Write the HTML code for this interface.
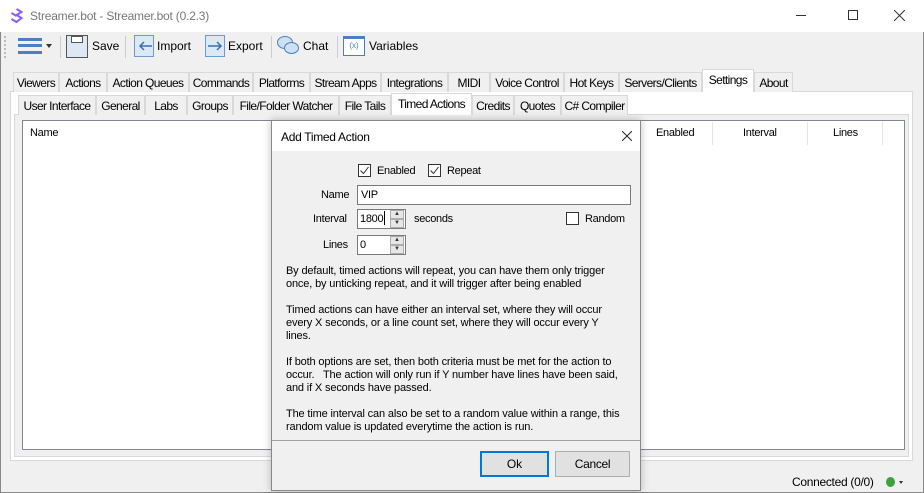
<!DOCTYPE html>
<html><head><meta charset="utf-8"><style>
*{box-sizing:border-box;margin:0;padding:0}
body{width:924px;height:493px;overflow:hidden;background:#f0f0f0;font-family:"Liberation Sans",sans-serif;font-size:12px;color:#000;position:relative}
.a{position:absolute;white-space:nowrap}
.tab{position:absolute;height:20px;border:1px solid #d9d9d9;border-bottom:none;background:#f0f0f0;font-size:12px;line-height:20px;text-align:center;letter-spacing:-0.6px}
.sel{background:#fff;border-color:#d9d9d9}
.s{font-size:11px;letter-spacing:-0.3px}
.p{font-size:11px;line-height:13px;white-space:pre;letter-spacing:-0.15px}
.cb{position:absolute;width:13px;height:13px;border:1px solid #333;background:#fff}
.spin{position:absolute;width:14px;border:1px solid #adadad;background:#e6e6e6;font-size:6px;line-height:7px;text-align:center;color:#333}
</style></head><body>
<div class="a" style="left:0;top:0;width:924px;height:493px;border:1px solid #888;border-top:none"></div>
<div class="a" style="left:0;top:0;width:924px;height:32px;background:#fff"></div>
<svg class="a" style="left:10px;top:8px" width="13" height="16" viewBox="0 0 13 16"><path d="M6.5 1 L11.5 4 L6.5 7 L11.5 10 L6.5 14 L1.5 11 M1.5 5 L6.5 8" fill="none" stroke="#8a5cf6" stroke-width="2"/></svg>
<div class="a" style="left:30px;top:9px;font-size:12px;color:#777;letter-spacing:-0.2px">Streamer.bot - Streamer.bot (0.2.3)</div>
<div class="a" style="left:796px;top:15px;width:10px;height:1px;background:#333"></div>
<div class="a" style="left:848px;top:10px;width:10px;height:10px;border:1px solid #333"></div>
<svg class="a" style="left:894px;top:10px" width="11" height="11"><path d="M0 0L11 11M11 0L0 11" stroke="#333" stroke-width="1"/></svg>
<div class="a" style="left:4px;top:36px;width:1px;height:22px;border-left:2px dotted #bbb"></div>
<div class="a" style="left:18px;top:38px;width:24px;height:16px;border-top:3px solid #4a7fc1;border-bottom:3px solid #4a7fc1"></div>
<div class="a" style="left:18px;top:44px;width:24px;height:3px;background:#4a7fc1"></div>
<div class="a" style="left:46px;top:44px;border:3px solid transparent;border-top:4px solid #333"></div>
<div class="a" style="left:60px;top:36px;width:1px;height:22px;background:#ccc"></div>
<div class="a" style="left:66px;top:35px;width:22px;height:23px;border:1px solid #555;background:#dce8f5"></div>
<div class="a" style="left:71px;top:36px;width:12px;height:7px;border:1px solid #555;background:#fff"></div>
<div class="a" style="left:92px;top:39px">Save</div>
<div class="a" style="left:125px;top:36px;width:1px;height:22px;background:#ccc"></div>
<div class="a" style="left:134px;top:35px;width:20px;height:22px;border:1px solid #6a9ad0;background:#dce8f5"></div>
<svg class="a" style="left:137px;top:40px" width="16" height="12"><path d="M15 6H3M7 2L3 6L7 10" fill="none" stroke="#3a6fb0" stroke-width="1.5"/></svg>
<div class="a" style="left:157px;top:39px">Import</div>
<div class="a" style="left:205px;top:35px;width:20px;height:22px;border:1px solid #6a9ad0;background:#dce8f5"></div>
<svg class="a" style="left:207px;top:40px" width="18" height="12"><path d="M1 6H14M10 2L14 6L10 10" fill="none" stroke="#3a6fb0" stroke-width="1.5"/></svg>
<div class="a" style="left:228px;top:39px">Export</div>
<div class="a" style="left:271px;top:36px;width:1px;height:22px;background:#ccc"></div>
<div class="a" style="left:277px;top:36px;width:16px;height:13px;border-radius:50%;border:1px solid #4a7fc1;background:#cfe0f3"></div>
<div class="a" style="left:284px;top:42px;width:15px;height:12px;border-radius:50%;border:1px solid #4a7fc1;background:#cfe0f3"></div>
<div class="a" style="left:303px;top:39px">Chat</div>
<div class="a" style="left:337px;top:36px;width:1px;height:22px;background:#ccc"></div>
<div class="a" style="left:343px;top:36px;width:22px;height:20px;border:1px solid #4a7fc1;border-top:3px solid #4a7fc1;background:#fff;font-size:8px;line-height:14px;text-align:center;color:#4a7fc1">(x)</div>
<div class="a" style="left:369px;top:39px">Variables</div>
<div class="a" style="left:10px;top:91px;width:903px;height:370px;border:1px solid #d9d9d9;background:#fff"></div>
<div class="tab" style="left:13px;top:72px;width:46px">Viewers</div>
<div class="tab" style="left:59px;top:72px;width:48px">Actions</div>
<div class="tab" style="left:107px;top:72px;width:82px">Action Queues</div>
<div class="tab" style="left:189px;top:72px;width:64px">Commands</div>
<div class="tab" style="left:253px;top:72px;width:57px">Platforms</div>
<div class="tab" style="left:310px;top:72px;width:71px">Stream Apps</div>
<div class="tab" style="left:381px;top:72px;width:67px">Integrations</div>
<div class="tab" style="left:448px;top:72px;width:42px">MIDI</div>
<div class="tab" style="left:490px;top:72px;width:74px">Voice Control</div>
<div class="tab" style="left:564px;top:72px;width:55px">Hot Keys</div>
<div class="tab" style="left:619px;top:72px;width:83px">Servers/Clients</div>
<div class="tab sel" style="left:702px;top:69px;width:52px;height:23px;line-height:20px">Settings</div>
<div class="tab" style="left:754px;top:72px;width:39px">About</div>
<div class="a" style="left:14px;top:114px;width:895px;height:343px;border:1px solid #d9d9d9;background:#f0f0f0"></div>
<div class="tab" style="left:18px;top:95px;width:78px">User Interface</div>
<div class="tab" style="left:96px;top:95px;width:49px">General</div>
<div class="tab" style="left:145px;top:95px;width:42px">Labs</div>
<div class="tab" style="left:187px;top:95px;width:46px">Groups</div>
<div class="tab" style="left:233px;top:95px;width:106px">File/Folder Watcher</div>
<div class="tab" style="left:339px;top:95px;width:52px">File Tails</div>
<div class="tab sel" style="left:391px;top:93px;width:81px;height:22px">Timed Actions</div>
<div class="tab" style="left:472px;top:95px;width:42px">Credits</div>
<div class="tab" style="left:514px;top:95px;width:47px">Quotes</div>
<div class="tab" style="left:561px;top:95px;width:67px">C# Compiler</div>
<div class="a" style="left:22px;top:120px;width:883px;height:330px;border:1px solid #828790;background:#fff"></div>
<div class="a s" style="left:30px;top:127px">Name</div>
<div class="a" style="left:712px;top:122px;width:1px;height:23px;background:#e5e5e5"></div>
<div class="a" style="left:807px;top:122px;width:1px;height:23px;background:#e5e5e5"></div>
<div class="a" style="left:882px;top:122px;width:1px;height:23px;background:#e5e5e5"></div>
<div class="a s" style="left:656px;top:127px">Enabled</div>
<div class="a s" style="left:743px;top:127px">Interval</div>
<div class="a s" style="left:833px;top:127px">Lines</div>
<div class="a" style="left:792px;top:475px;font-size:12px;letter-spacing:-0.3px">Connected (0/0)</div>
<div class="a" style="left:886px;top:477px;width:9px;height:10px;border-radius:50%;background:#3ca33c"></div>
<div class="a" style="left:899px;top:481px;border:2px solid transparent;border-top:3px solid #333"></div>
<div class="a" style="left:271px;top:120px;width:370px;height:371px;border:1px solid #888;background:#f0f0f0;box-shadow:0 0 8px rgba(0,0,0,.25)"></div>
<div class="a" style="left:272px;top:121px;width:368px;height:30px;background:#fff"></div>
<div class="a" style="left:281px;top:130px;font-size:12px;letter-spacing:-0.3px">Add Timed Action</div>
<svg class="a" style="left:622px;top:131px" width="10" height="10"><path d="M0 0L10 10M10 0L0 10" stroke="#222" stroke-width="1"/></svg>
<div class="cb" style="left:358px;top:164px"></div><svg class="a" style="left:360px;top:166px" width="9" height="9"><path d="M0.5 4.5L3.5 7.5L8.5 1" fill="none" stroke="#333"/></svg>
<div class="a s" style="left:377px;top:165px">Enabled</div>
<div class="cb" style="left:428px;top:164px"></div><svg class="a" style="left:430px;top:166px" width="9" height="9"><path d="M0.5 4.5L3.5 7.5L8.5 1" fill="none" stroke="#333"/></svg>
<div class="a s" style="left:447px;top:165px">Repeat</div>
<div class="a s" style="left:321px;top:189px">Name</div>
<div class="a" style="left:357px;top:185px;width:274px;height:20px;border:1px solid #7a7a7a;background:#fff"></div>
<div class="a s" style="left:361px;top:189px">VIP</div>
<div class="a s" style="left:313px;top:213px">Interval</div>
<div class="a" style="left:357px;top:209px;width:49px;height:20px;border:1px solid #7a7a7a;background:#fff"></div>
<div class="a s" style="left:360px;top:213px">1800</div>
<div class="a" style="left:384px;top:211px;width:1px;height:14px;background:#000"></div>
<div class="spin" style="left:390px;top:210px;height:9px">▲</div><div class="spin" style="left:390px;top:219px;height:9px">▼</div>
<div class="a s" style="left:414px;top:213px">seconds</div>
<div class="cb" style="left:566px;top:212px"></div>
<div class="a s" style="left:585px;top:213px">Random</div>
<div class="a s" style="left:323px;top:239px">Lines</div>
<div class="a" style="left:357px;top:235px;width:49px;height:20px;border:1px solid #7a7a7a;background:#fff"></div>
<div class="a s" style="left:360px;top:239px">0</div>
<div class="spin" style="left:390px;top:236px;height:9px">▲</div><div class="spin" style="left:390px;top:245px;height:9px">▼</div>
<div class="a p" style="left:286px;top:265px">By default, timed actions will repeat, you can have them only trigger
once, by unticking repeat, and it will trigger after being enabled</div>
<div class="a p" style="left:286px;top:304px">Timed actions can have either an interval set, where they will occur
every X seconds, or a line count set, where they will occur every Y
lines.</div>
<div class="a p" style="left:286px;top:356px">If both options are set, then both criteria must be met for the action to
occur.   The action will only run if Y number have lines have been said,
and if X seconds have passed.</div>
<div class="a p" style="left:286px;top:408px">The time interval can also be set to a random value within a range, this
random value is updated everytime the action is run.</div>
<div class="a" style="left:272px;top:440px;width:368px;height:1px;background:#a0a0a0"></div>
<div class="a" style="left:480px;top:451px;width:69px;height:26px;border:2px solid #0078d7;background:#e1e1e1;text-align:center;line-height:22px;font-size:12px">Ok</div>
<div class="a" style="left:555px;top:451px;width:75px;height:26px;border:1px solid #adadad;background:#e1e1e1;text-align:center;line-height:24px;font-size:12px;letter-spacing:-0.3px">Cancel</div>
</body></html>
